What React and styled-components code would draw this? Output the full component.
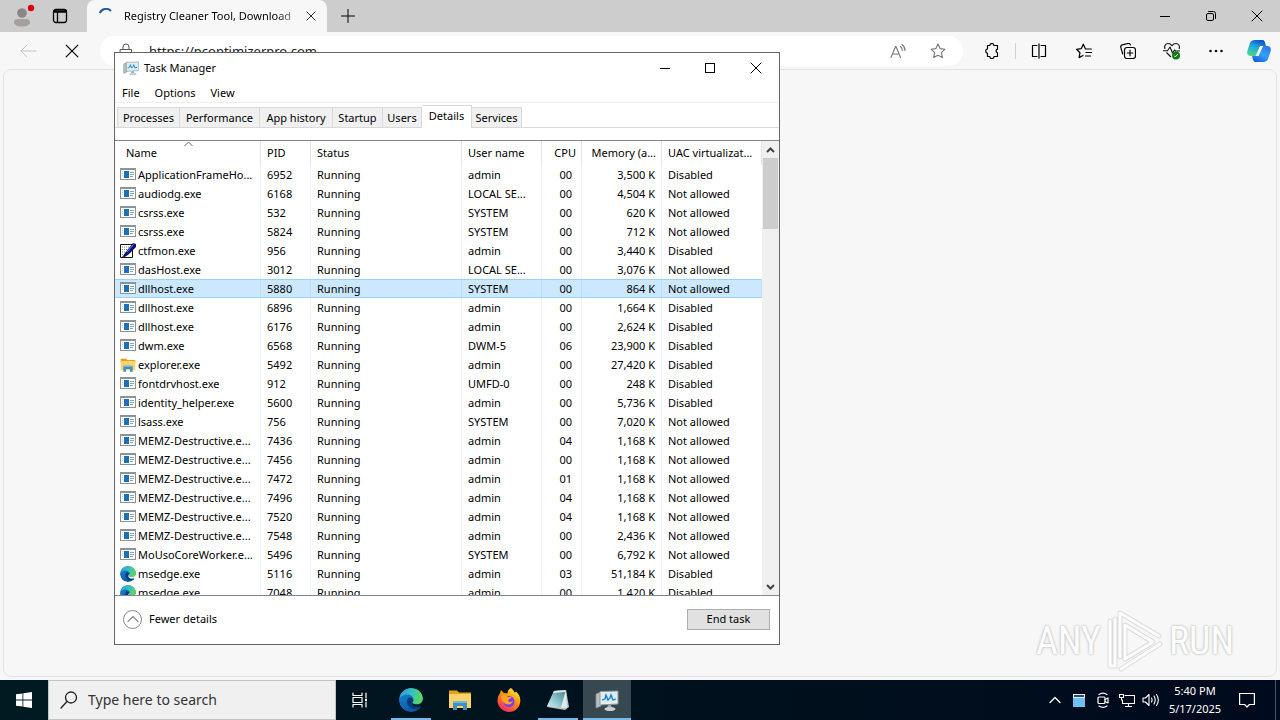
import React from 'react';
import styled, { createGlobalStyle, css } from 'styled-components';

const GlobalStyle = createGlobalStyle`
  * {
    box-sizing: border-box;
  }

  html, body, #root {
    height: 100%;
  }

  body {
    margin: 0;
    overflow: hidden;
    background: #f7f7f7;
    color: #000;
    font-family: 'Noto Sans', 'Open Sans', sans-serif;
    font-size: 11px;
    line-height: 16px;
  }

  button, input {
    margin: 0;
    padding: 0;
    border: 0;
    background: none;
    color: inherit;
    font: inherit;
  }

  svg {
    display: block;
    flex: none;
  }
`;

const PROCESSES = [
  ['app', 'ApplicationFrameHo...', 6952, 'admin', '00', '3,500 K', 'Disabled'],
  ['app', 'audiodg.exe', 6168, 'LOCAL SE...', '00', '4,504 K', 'Not allowed'],
  ['app', 'csrss.exe', 532, 'SYSTEM', '00', '620 K', 'Not allowed'],
  ['app', 'csrss.exe', 5824, 'SYSTEM', '00', '712 K', 'Not allowed'],
  ['pen', 'ctfmon.exe', 956, 'admin', '00', '3,440 K', 'Disabled'],
  ['app', 'dasHost.exe', 3012, 'LOCAL SE...', '00', '3,076 K', 'Not allowed'],
  ['app', 'dllhost.exe', 5880, 'SYSTEM', '00', '864 K', 'Not allowed'],
  ['app', 'dllhost.exe', 6896, 'admin', '00', '1,664 K', 'Disabled'],
  ['app', 'dllhost.exe', 6176, 'admin', '00', '2,624 K', 'Disabled'],
  ['app', 'dwm.exe', 6568, 'DWM-5', '06', '23,900 K', 'Disabled'],
  ['folder', 'explorer.exe', 5492, 'admin', '00', '27,420 K', 'Disabled'],
  ['app', 'fontdrvhost.exe', 912, 'UMFD-0', '00', '248 K', 'Disabled'],
  ['app', 'identity_helper.exe', 5600, 'admin', '00', '5,736 K', 'Disabled'],
  ['app', 'lsass.exe', 756, 'SYSTEM', '00', '7,020 K', 'Not allowed'],
  ['app', 'MEMZ-Destructive.e...', 7436, 'admin', '04', '1,168 K', 'Not allowed'],
  ['app', 'MEMZ-Destructive.e...', 7456, 'admin', '00', '1,168 K', 'Not allowed'],
  ['app', 'MEMZ-Destructive.e...', 7472, 'admin', '01', '1,168 K', 'Not allowed'],
  ['app', 'MEMZ-Destructive.e...', 7496, 'admin', '04', '1,168 K', 'Not allowed'],
  ['app', 'MEMZ-Destructive.e...', 7520, 'admin', '04', '1,168 K', 'Not allowed'],
  ['app', 'MEMZ-Destructive.e...', 7548, 'admin', '00', '2,436 K', 'Not allowed'],
  ['app', 'MoUsoCoreWorker.e...', 5496, 'SYSTEM', '00', '6,792 K', 'Not allowed'],
  ['edge', 'msedge.exe', 5116, 'admin', '03', '51,184 K', 'Disabled'],
  ['edge', 'msedge.exe', 7048, 'admin', '00', '1,420 K', 'Disabled'],
];

const SELECTED_PID = 5880;

/* Icons */

const Line = ({ size = 16, box = 16, width = 1, color = 'currentColor', children }) => (
  <svg
    width={size}
    height={size}
    viewBox={`0 0 ${box} ${box}`}
    fill="none"
    stroke={color}
    strokeWidth={width}
    strokeLinecap="round"
    strokeLinejoin="round"
    aria-hidden="true"
  >
    {children}
  </svg>
);

const CloseIcon = ({ size = 12 }) => (
  <Line size={size} box={12}>
    <path d="M1 1l10 10M11 1L1 11" />
  </Line>
);

const MinimizeIcon = () => (
  <svg width="12" height="12" shapeRendering="crispEdges" aria-hidden="true">
    <path d="M1 6h10v1H1z" />
  </svg>
);

const MaximizeIcon = () => (
  <svg width="12" height="12" fill="none" stroke="#000" shapeRendering="crispEdges" aria-hidden="true">
    <path d="M1.5 1.5h9v9h-9z" />
  </svg>
);

const RestoreIcon = () => (
  <Line size={12} box={12}>
    <rect x="1.5" y="3.5" width="7" height="7" rx="1.5" />
    <path d="M3.5 1.5h5a2 2 0 0 1 2 2v5" />
  </Line>
);

const ProfileIcon = () => (
  <svg width="24" height="24" viewBox="0 0 24 24" aria-hidden="true">
    <circle cx="11" cy="9" r="4.8" fill="#8b8684" />
    <path d="M3 18.5c0-2.500 1.500-3.500 3.500-3.500h9c2 0 3.500 1 3.500 3.500C19 21 15 22.500 11 22.500S3 21 3 18.500z" fill="#a3a09e" />
    <circle cx="20" cy="4" r="3.2" fill="#d9000f" />
  </svg>
);

const TabActionsIcon = () => (
  <Line width={1.3}>
    <rect x="1.5" y="1.5" width="13" height="13" rx="2.5" />
    <path d="M2 4h12M5.500 5v9M2 3h12" />
  </Line>
);

const SpinnerIcon = () => (
  <svg width="16" height="16" viewBox="0 0 16 16" fill="none" stroke="#1d5fa0" strokeWidth="2" aria-hidden="true">
    <path d="M1.800 5A6.800 6.800 0 0 1 13 3" />
  </svg>
);

const PlusIcon = () => (
  <Line>
    <path d="M8 1.500v13M1.500 8h13" />
  </Line>
);

const BackIcon = () => (
  <Line size={18} box={18} color="#c4c4c4">
    <path d="M17 9H2M8 3L2 9l6 6" />
  </Line>
);

const LockIcon = () => (
  <Line color="#555">
    <path d="M2.500 6.500h11v8h-11zM5 6.500V4a3 3 0 0 1 6 0v2.500M8 10v1" />
  </Line>
);

const ReadAloudIcon = () => (
  <Line color="#777" width={1.1}>
    <path d="M1 14.500L5.500 3.500h.5l4.500 11M2.500 11h6.500M10.500 3.500c1.200.9 1.800 2.200 1.800 4M12 1.500c2 1.400 3 3.400 3 6" />
  </Line>
);

const StarIcon = () => (
  <Line color="#777" width={1.1}>
    <path d="M8 1l2.100 4.600 4.900.6-3.600 3.400 1 5L8 12.200 3.600 14.600l1-5L1 6.200l4.900-.6z" />
  </Line>
);

const ExtensionsIcon = () => (
  <Line width={1.2}>
    <path d="M3.500 2.500h2.300a2 2 0 0 1 4 0h3.700v3.700a1.900 1.900 0 0 0 0 3.700v3.600H10a2 2 0 0 1-4.200 0H3.500V10.300a2.300 2.300 0 0 1 0-4.500z" />
  </Line>
);

const SplitIcon = () => (
  <Line width={1.2}>
    <path d="M6 2.500H1.500v11H6M10 2.500h4.500v11H10M8 .8v14.400" />
  </Line>
);

const FavoritesIcon = () => (
  <Line width={1.2}>
    <path d="M15.300 6H9.500L7.300 1.200 5.200 5.700l-4.700.6L4 9.700l-.9 4.900L7 12.500M10 9.500h5.500M9.500 13h5" />
  </Line>
);

const CollectionsIcon = () => (
  <Line width={1.2}>
    <rect x="4.5" y="4.5" width="11" height="11" rx="2.5" />
    <path d="M10 7.200v5.600M7.200 10h5.600M2.700 11L.8 4.400a2 2 0 0 1 1.400-2.500L8 .5a2 2 0 0 1 2.400 1.400" />
  </Line>
);

const HealthIcon = () => (
  <svg width="18" height="18" viewBox="0 0 18 18" fill="none" stroke="#111" strokeWidth="1.1" strokeLinejoin="round" aria-hidden="true">
    <path d="M2 7C.8 3.500 3 1.500 5 1.500c2 0 3.200 1 4 2.200.8-1.200 2-2.200 4-2.200 2.300 0 4.200 2.200 3.200 5.500M3.500 10.500L8 15M0 8.800h4.500L7 5l2.500 6 2-3 1 1H17" />
    <circle cx="13" cy="13.5" r="4" fill="#0f7b0f" stroke="none" />
    <path d="M11.200 13.700l1.200 1.200 2.400-2.800" stroke="#fff" strokeWidth="1" />
  </svg>
);

const MoreIcon = () => (
  <svg width="16" height="16" fill="#111" aria-hidden="true">
    <circle cx="2.5" cy="8" r="1.3" />
    <circle cx="8" cy="8" r="1.3" />
    <circle cx="13.5" cy="8" r="1.3" />
  </svg>
);

const CopilotIcon = () => (
  <svg width="24" height="24" viewBox="0 0 24 24" aria-hidden="true">
    <defs>
      <linearGradient id="copilotLeft" x1="0.7" y1="0" x2="0.3" y2="1">
        <stop offset="0" stopColor="#0b4fc4" />
        <stop offset="0.45" stopColor="#1fa7e0" />
        <stop offset="1" stopColor="#4fd68a" />
      </linearGradient>
      <linearGradient id="copilotRight" x1="0.8" y1="0" x2="0.2" y2="1">
        <stop offset="0" stopColor="#2f73ea" />
        <stop offset="0.5" stopColor="#35a2f4" />
        <stop offset="1" stopColor="#1259d8" />
      </linearGradient>
    </defs>
    <path d="M8 1h7.500c1.800 0 2.200 1.500 2.700 3l.8 3h-4c-2 0-2.600 1.300-3 2.800L10.500 15c-.5 1.500-1.200 2-2.700 2H4C.5 17-.5 14.500.5 11.500l2.300-7C3.600 2.200 5 1 8 1z" fill="url(#copilotLeft)" />
    <path d="M16 23H8.500c-1.800 0-2.200-1.500-2.700-3L5 17h4c2 0 2.600-1.300 3-2.800L13.500 9c.5-1.500 1.200-2 2.700-2H20c3.500 0 4.500 2.500 3.500 5.500l-2.300 7C20.400 21.800 19 23 16 23z" fill="url(#copilotRight)" />
    <path d="M13.200 7h3L11.500 17h-3z" fill="#fff" />
  </svg>
);

const EdgeIcon = ({ size = 16 }) => (
  <svg width={size} height={size} viewBox="0 0 24 24" aria-hidden="true">
    <defs>
      <linearGradient id="edgeTop" x1="0" y1="0.3" x2="1" y2="0.5">
        <stop offset="0" stopColor="#2a9fdc" />
        <stop offset="0.5" stopColor="#35c1c0" />
        <stop offset="1" stopColor="#5fd955" />
      </linearGradient>
      <linearGradient id="edgeBody" x1="0" y1="0" x2="0.8" y2="1">
        <stop offset="0" stopColor="#1b8ad6" />
        <stop offset="1" stopColor="#0c4d9c" />
      </linearGradient>
      <clipPath id="edgeClip">
        <path d="M12 0c7 0 12 5 12 10.500 0 3-1.500 5-4 6l2 3C20 22.500 16 24 12 24 5.400 24 0 18.600 0 12S5.400 0 12 0z" />
      </clipPath>
    </defs>
    <g clipPath="url(#edgeClip)">
      <circle cx="12" cy="12" r="12" fill="url(#edgeBody)" />
      <path d="M.3 10.500C1 4.500 6 0 12 0c7 0 12 5 12 10.500 0 3.800-3 6-6.300 6-3 0-4.400-1-4.400-1.900 0-.8 1.200-1.200 1.200-3 0-2.500-2.500-5-6.200-5C4.500 6.600 1.300 8.500.3 10.500z" fill="url(#edgeTop)" />
      <path d="M9.200 10c-3 4.500.3 10.300 6 10.900 2.800.2 5-.7 7.200-2.500-2.800 1.300-6.500 1-8.700-.8-2-1.600-2.200-3.600.4-5-.2-2.600-3-4-4.900-2.600z" fill="#073a78" />
      <path d="M14.500 11.500c0 1.800-1.200 2.200-1.200 3 0 .9 1.400 1.900 4.400 1.900 2 0 4.300-.9 5.500-2.700L24 16l-2 2.200c-3 1.200-6.300.9-8.200-.7-2-1.600-1.500-4.500.7-6z" fill={size > 16 ? '#06202c' : '#fff'} />
    </g>
  </svg>
);

const FolderIcon = ({ size = 16 }) => (
  <svg width={size} height={size} viewBox="0 0 24 24" aria-hidden="true">
    <path d="M1 2.500h8l2 2h12v4H1z" fill="#e3a21c" />
    <path d="M1 6h22v14H1z" fill="#ffd368" />
    <path d="M5 13h14v9h-4v-4H9v4H5z" fill="#3f8fc4" />
    <path d="M5 13h14v2H5z" fill="#6fb8e0" />
  </svg>
);

const AppIcon = () => (
  <svg width="16" height="16" shapeRendering="crispEdges" aria-hidden="true">
    <path d="M0 1h16v12H0z" fill="#8b9298" />
    <path d="M1 3h14v9H1z" fill="#fff" />
    <path d="M4 4h5v7H4z" fill="#1d6fb8" />
    <path d="M2 4h1v1H2zM2 6h1v1H2zM2 8h1v1H2z" fill="#c5d5e2" />
    <path d="M10 5h4v1h-4zM10 7h4v1h-4zM10 9h3v1h-3z" fill="#86a5bd" />
  </svg>
);

const PenIcon = () => (
  <svg width="16" height="16" viewBox="0 0 16 16" aria-hidden="true">
    <path d="M.5 1.500h12v13H.5z" fill="#fff" stroke="#111" />
    <path d="M2 4h8M2 6.500h6M2 9h4M2 11.500h3" stroke="#777" strokeDasharray="1 1" />
    <path d="M13 0l3 1v3L8 12l-5 3 2-5z" fill="#10107a" />
    <path d="M13.500 1.500L7 9" stroke="#7482e0" />
    <path d="M2 15l3-4" stroke="#000" />
  </svg>
);

const TaskManagerIcon = ({ size = 16 }) => (
  <svg width={size} height={size} viewBox="0 0 24 24" aria-hidden="true">
    <path d="M1 6l5-2v14l-5 2z" fill="#b9bec2" stroke="#888f94" strokeWidth=".8" />
    <path d="M5 3.500L23 3v13L5 17z" fill="#e6ecef" stroke="#8b979f" />
    <path d="M7 5.500L21 5v9L7 15z" fill="#d4edfa" />
    <path d="M7 12l3-1 1-4 2 5 2-2 1-3 2 5 3-1" fill="none" stroke="#1b78b5" strokeWidth="1.3" />
    <path d="M13 17h3l1 3h-5z" fill="#9aa4aa" />
    <ellipse cx="15" cy="21" rx="5.500" ry="2" fill="#c9d0d4" />
  </svg>
);

const FirefoxIcon = () => (
  <svg width="24" height="24" viewBox="0 0 24 24" aria-hidden="true">
    <defs>
      <linearGradient id="foxBody" x1="0.8" y1="0" x2="0.2" y2="1">
        <stop offset="0" stopColor="#fff04a" />
        <stop offset="0.4" stopColor="#ff980e" />
        <stop offset="1" stopColor="#f2206a" />
      </linearGradient>
    </defs>
    <path d="M14 0c2 1.500 3 3 3.500 4.500 1-.3 1.300-.5 1.500-1 3 3 4.500 5.500 4.300 9.500C23 19.500 18 24 12 24S.5 19 .5 12.800c0-3 1-5.800 2.500-7.600L4 2l2.800 3c1.400-.2 2.700 0 3.700.5C10.500 3 12 1 14 0z" fill="url(#foxBody)" />
    <circle cx="12" cy="13.500" r="5.500" fill="#7a3cf0" />
    <path d="M4 8c2.500-1.500 5-.8 6.500 1h4c-.2 1.500-3 1.800-3.200 3.200C11 14 13.500 15 16 13c-1 3.500-5 4.500-8 2.500C5.500 14 4.500 11 4 8z" fill="#ffa51a" />
  </svg>
);

const NotepadIcon = () => (
  <svg width="24" height="24" viewBox="0 0 24 24" aria-hidden="true">
    <defs>
      <linearGradient id="padFace" x1="1" y1="0" x2="0" y2="1">
        <stop offset="0" stopColor="#3f7f8c" />
        <stop offset="0.6" stopColor="#93cbd2" />
        <stop offset="1" stopColor="#d7f0f0" />
      </linearGradient>
    </defs>
    <path d="M8 3l12-1 3 17-4 3-18-3z" fill="#b9c4c6" />
    <path d="M8 3l12-1-5 18-14-2z" fill="url(#padFace)" />
    <path d="M20 2l-5 18 6-.5z" fill="#e3ebec" />
    <path d="M8 3l12-1-.5 2L7 5z" fill="#d5e6ea" />
  </svg>
);

const WindowsLogo = () => (
  <svg width="16" height="16" viewBox="0 0 16 16" fill="#fff" aria-hidden="true">
    <path d="M0 2.300L6.500 1.400v6.200H0zM7.300 1.300L16 0v7.600H7.300zM0 8.400h6.500v6.200L0 13.700zM7.300 8.400H16V16l-8.700-1.300z" />
  </svg>
);

const SearchIcon = () => (
  <Line size={18} box={18} width={1.3} color="#222">
    <circle cx="11" cy="6.500" r="5.500" />
    <path d="M7 10.500L1 17" />
  </Line>
);

const TaskViewIcon = () => (
  <Line width={1.2} color="#fff">
    <path d="M1 1v2.500h9V1M1 15v-2.500h9V15M1 5.500h9v5H1zM14 1v5M14 10v5" />
    <path d="M13 7h2v2h-2z" fill="#fff" stroke="none" />
  </Line>
);

const ChevronUpIcon = ({ width = 1.3 }) => (
  <Line width={width}>
    <path d="M3 10.500l5-5 5 5" />
  </Line>
);

const AppTrayIcon = () => (
  <svg width="12" height="13" aria-hidden="true">
    <path d="M0 0h12v13H0z" fill="#6fc0f5" />
    <path d="M0 0h12v4H0z" fill="#dfeefa" />
    <path d="M1 1h10v2H1z" fill="#24506e" />
  </svg>
);

const CameraTrayIcon = () => (
  <Line color="#fff" width={1.2}>
    <rect x="3" y="5" width="7" height="6.500" rx="1" />
    <path d="M10 7.500l3-1.500v5l-3-1.500M4 2.500c2.500-1.800 5.500-1.800 8 0M4 14c2.500 1.600 5.500 1.600 8 0" />
  </Line>
);

const NetworkTrayIcon = () => (
  <Line color="#fff" width={1.1}>
    <path d="M6 3.500h9.500v8H3.500V8M9.500 11.500v3M6.500 14.500h6M.5 2.500h4v3h-4zM2.500 5.500V8h1" />
  </Line>
);

const SoundTrayIcon = () => (
  <Line size={18} box={18} color="#fff" width={1.1}>
    <path d="M1 7h2.500L7 3.500v11L3.500 11H1zM9.500 7c.7 1.200.7 2.800 0 4M12 5c1.500 2.500 1.500 5.500 0 8M14.500 3.500c2.200 3.300 2.200 7.700 0 11" />
  </Line>
);

const MessageIcon = () => (
  <Line color="#fff" width={1.2}>
    <path d="M.6 1.500h14.800v11h-5L8 15l-2.400-2.500h-5z" />
  </Line>
);

const ribbons = 'M15 48V4l39 23M5 12v45h5V10M16 60l39-25M20 50V16l28 17-28 17';

const WatermarkIcon = () => (
  <svg width="60" height="64" viewBox="0 0 60 64" fill="none" strokeLinejoin="round" strokeLinecap="round" aria-hidden="true">
    <path d={ribbons} stroke="#dcdcdc" strokeWidth="5" />
    <path d={ribbons} stroke="#fcfcfc" strokeWidth="3" />
  </svg>
);

const processIcons = {
  app: AppIcon,
  pen: PenIcon,
  folder: FolderIcon,
  edge: EdgeIcon,
};

/* Browser */

const Desktop = styled.div`
  height: 100vh;
  display: flex;
  flex-direction: column;
`;

const Browser = styled.main`
  position: relative;
  flex: 1;
  min-height: 0;
  display: flex;
  flex-direction: column;
  background: #f7f7f7;
`;

const TabStrip = styled.div`
  height: 32px;
  display: flex;
  align-items: stretch;
  background: #cdcdcd;
`;

const IconButton = styled.button`
  width: ${({ $width }) => $width || 32}px;
  display: flex;
  align-items: center;
  justify-content: center;
`;

const ProfileButton = styled(IconButton)`
  margin-left: 4px;
`;

const BrowserTab = styled.div`
  width: 240px;
  display: flex;
  align-items: center;
  gap: 10px;
  margin-left: 9px;
  padding: 0 8px 0 11px;
  border-radius: 8px 8px 0 0;
  background: #f7f7f7;
`;

const TabTitle = styled.span`
  flex: 1;
  white-space: nowrap;
  mask-image: linear-gradient(90deg, #000 90%, #0006);
`;

const WindowControls = styled.div`
  display: flex;
  margin-left: auto;
`;

const Toolbar = styled.div`
  height: 37px;
  display: flex;
  align-items: center;
`;

const NavButtons = styled.div`
  width: 100px;
  display: flex;
  align-items: center;
  padding-left: 6px;
`;

const AddressBar = styled.div`
  flex: 1;
  height: 30px;
  display: flex;
  align-items: center;
  gap: 15px;
  padding: 0 9px 0 18px;
  border-radius: 15px;
  background: #fff;
`;

const AddressInput = styled.input`
  flex: 1;
  min-width: 0;
  outline: 0;
  color: #222;
  font-size: 13px;
  line-height: 20px;
`;

const ToolbarActions = styled.div`
  display: flex;
  align-items: center;
  padding-left: 6px;
`;

const Divider = styled.span`
  width: 1px;
  height: 16px;
  background: #d0d0d0;
`;

const PageFrame = styled.section`
  flex: 1;
  display: flex;
  align-items: flex-end;
  justify-content: flex-end;
  margin: 0 3px 3px;
  padding: 0 42px 3px 0;
  border: 1px solid #e3e3e3;
  border-radius: 8px;
`;

const Watermark = styled.div`
  display: flex;
  align-items: center;
  gap: 4px;
  color: #fcfcfc;
  font-family: 'Roboto Condensed', 'Liberation Sans Narrow', Roboto, sans-serif;
  font-size: 38px;
  line-height: 64px;
  text-shadow: 0 0 2px #bbb, 0 0 3px #ccc;
`;

/* Task manager */

const Window = styled.section`
  position: absolute;
  top: 52px;
  left: 114px;
  width: 666px;
  display: flex;
  flex-direction: column;
  border: 1px solid #666;
  background: #fff;
`;

const TitleBar = styled.header`
  height: 30px;
  display: flex;
  align-items: stretch;
  padding-left: 8px;
`;

const WindowTitle = styled.h1`
  display: flex;
  align-items: center;
  gap: 5px;
  margin: 0;
  font-size: 11px;
  font-weight: 400;
`;

const MenuBar = styled.nav`
  height: 20px;
  display: flex;
  align-items: center;
  gap: 15px;
  padding-left: 7px;
  border-bottom: 1px solid #efefef;
`;

const TabList = styled.div`
  height: 25px;
  display: flex;
  align-items: flex-end;
  padding-left: 2px;
  border-bottom: 1px solid #d9d9d9;
`;

const TabButton = styled.button`
  width: ${({ $width }) => $width}px;
  height: 20px;
  border: 1px solid #d9d9d9;
  border-left-width: 0;
  border-bottom: 0;
  background: #f0f0f0;
  white-space: nowrap;

  &:first-child {
    border-left-width: 1px;
  }

  ${({ $active }) =>
    $active &&
    css`
      height: 23px;
      margin-bottom: -1px;
      padding-bottom: 2px;
      background: #fff;
    `};
`;

const ListArea = styled.div`
  height: 456px;
  display: flex;
  margin-top: 12px;
  overflow: hidden;
  border-top: 1px solid #828790;
  border-bottom: 1px solid #828790;
`;

const ProcessTable = styled.table`
  width: calc(100% - 17px);
  align-self: flex-start;
  table-layout: fixed;
  border-collapse: separate;
  border-spacing: 0;
`;

const HeaderCell = styled.th`
  position: relative;
  width: ${({ $width }) => $width}px;
  height: 24px;
  padding: 0 5px 0 6px;
  border-right: 1px solid #e5e5e5;
  font-weight: 400;
  text-align: ${({ $align }) => $align || 'left'};
  white-space: nowrap;

  &:first-child {
    padding-left: 11px;
  }
`;

const SortMark = styled.span`
  position: absolute;
  top: 0;
  left: 69px;
  color: #666;
`;

const Cell = styled.td`
  height: 19px;
  padding: 0 ${({ $end }) => $end || 0}px 0 6px;
  border-right: 1px solid #edf4fa;
  text-align: ${({ $align }) => $align || 'left'};
  white-space: nowrap;

  &:last-child {
    border-right-color: transparent;
  }
`;

const Row = styled.tr`
  ${({ $selected }) =>
    $selected &&
    css`
      ${Cell} {
        border-top: 1px solid #99d1ff;
        border-bottom: 1px solid #99d1ff;
        border-right-color: #bfe0f8;
        background: #cce8ff;
      }
    `};
`;

const NameCell = styled.div`
  height: 17px;
  display: flex;
  align-items: center;
  gap: 2px;
  margin-left: -1px;
`;

const Scrollbar = styled.div`
  width: 17px;
  display: flex;
  flex-direction: column;
  background: #f0f0f0;
`;

const ScrollButton = styled.button`
  height: 17px;
  display: flex;
  align-items: center;
  justify-content: center;
  color: #444;
`;

const ScrollThumb = styled.div`
  height: 71px;
  margin: 0 1px auto;
  background: #cdcdcd;
`;

const WindowFooter = styled.footer`
  height: 48px;
  display: flex;
  align-items: center;
  justify-content: space-between;
  padding: 0 9px 2px 8px;
`;

const DetailsButton = styled.button`
  display: flex;
  align-items: center;
  gap: 7px;
`;

const Circle = styled.span`
  width: 19px;
  height: 19px;
  display: flex;
  align-items: center;
  justify-content: center;
  border: 1px solid #888;
  border-radius: 50%;
  color: #888;
`;

const EndTaskButton = styled.button`
  width: 83px;
  height: 21px;
  border: 1px solid #adadad;
  background: #e1e1e1;
`;

/* Taskbar */

const Taskbar = styled.footer`
  height: 40px;
  display: flex;
  align-items: stretch;
  background: linear-gradient(90deg, #001a22, #00101c 60%, #000a1e);
  color: #fff;
`;

const SearchBox = styled.label`
  width: 288px;
  display: flex;
  align-items: center;
  gap: 10px;
  padding-left: 11px;
  border: 1px solid #c4c4c4;
  background: #f0f0f0;
`;

const SearchInput = styled.input`
  flex: 1;
  min-width: 0;
  outline: 0;
  font-size: 14px;
  line-height: 20px;

  &::placeholder {
    color: #333;
    opacity: 1;
  }
`;

const TaskButtons = styled.div`
  display: flex;
  gap: 1px;
  margin-left: 3px;
`;

const TaskButton = styled.button`
  width: 48px;
  display: flex;
  align-items: center;
  justify-content: center;
  background: ${({ $active }) => ($active ? '#384850' : 'none')};
  ${({ $running }) =>
    $running &&
    css`
      margin: 0 4px;
      width: 40px;
      box-shadow: inset 0 -2px #76b9ed;
    `};
  ${({ $active }) =>
    $active &&
    css`
      box-shadow: inset 0 -2px #76b9ed;
    `};
`;

const Tray = styled.div`
  display: flex;
  margin-left: auto;
`;

const Clock = styled.time`
  width: 64px;
  display: flex;
  flex-direction: column;
  justify-content: center;
  line-height: 18px;
  text-align: center;
  white-space: nowrap;
`;

const ShowDesktop = styled.button`
  width: 5px;
  margin-left: 8px;
  border-left: 1px solid #4c5666;
`;

const tabs = [
  ['Processes', 63],
  ['Performance', 80],
  ['App history', 73],
  ['Startup', 50],
  ['Users', 39],
  ['Details', 50],
  ['Services', 50],
];

const columns = [
  ['Name', 146],
  ['PID', 50],
  ['Status', 151],
  ['User name', 80],
  ['CPU', 40, 'right'],
  ['Memory (a...', 80, 'right'],
  ['UAC virtualizat...', 100],
];

const TaskManager = () => (
  <Window aria-label="Task Manager">
    <TitleBar>
      <WindowTitle>
        <TaskManagerIcon />
        Task Manager
      </WindowTitle>
      <WindowControls>
        <IconButton $width={45} aria-label="Minimize">
          <MinimizeIcon />
        </IconButton>
        <IconButton $width={46} aria-label="Maximize">
          <MaximizeIcon />
        </IconButton>
        <IconButton $width={46} aria-label="Close">
          <CloseIcon />
        </IconButton>
      </WindowControls>
    </TitleBar>
    <MenuBar>
      <button>File</button>
      <button>Options</button>
      <button>View</button>
    </MenuBar>
    <TabList role="tablist">
      {tabs.map(([name, width]) => (
        <TabButton
          key={name}
          role="tab"
          aria-selected={name === 'Details'}
          $width={width}
          $active={name === 'Details'}
        >
          {name}
        </TabButton>
      ))}
    </TabList>
    <ListArea>
      <ProcessTable>
        <thead>
          <tr>
            {columns.map(([name, width, align]) => (
              <HeaderCell key={name} $width={width} $align={align}>
                {name}
                {name === 'Name' && (
                  <SortMark>
                    <svg width="9" height="6" fill="none" stroke="currentColor" aria-hidden="true">
                      <path d="M.5 5l4-4 4 4" />
                    </svg>
                  </SortMark>
                )}
              </HeaderCell>
            ))}
          </tr>
        </thead>
        <tbody>
          {PROCESSES.map(([icon, name, pid, user, cpu, memory, uac]) => {
            const Icon = processIcons[icon];
            return (
              <Row key={pid} $selected={pid === SELECTED_PID}>
                <Cell>
                  <NameCell>
                    <Icon />
                    {name}
                  </NameCell>
                </Cell>
                <Cell>{pid}</Cell>
                <Cell>Running</Cell>
                <Cell>{user}</Cell>
                <Cell $align="right" $end={9}>{cpu}</Cell>
                <Cell $align="right" $end={6}>{memory}</Cell>
                <Cell>{uac}</Cell>
              </Row>
            );
          })}
        </tbody>
      </ProcessTable>
      <Scrollbar>
        <ScrollButton aria-label="Scroll up">
          <svg width="9" height="6" fill="none" stroke="currentColor" strokeWidth="2" aria-hidden="true">
            <path d="M1 5l3.500-3.500L8 5" />
          </svg>
        </ScrollButton>
        <ScrollThumb />
        <ScrollButton aria-label="Scroll down">
          <svg width="9" height="6" fill="none" stroke="currentColor" strokeWidth="2" aria-hidden="true">
            <path d="M1 1l3.500 3.500L8 1" />
          </svg>
        </ScrollButton>
      </Scrollbar>
    </ListArea>
    <WindowFooter>
      <DetailsButton>
        <Circle>
          <ChevronUpIcon width={1.1} />
        </Circle>
        Fewer details
      </DetailsButton>
      <EndTaskButton>End task</EndTaskButton>
    </WindowFooter>
  </Window>
);

const App = () => (
  <Desktop>
    <GlobalStyle />
    <Browser>
      <TabStrip>
        <ProfileButton $width={38} aria-label="Profile">
          <ProfileIcon />
        </ProfileButton>
        <IconButton $width={36} aria-label="Tab actions">
          <TabActionsIcon />
        </IconButton>
        <BrowserTab>
          <SpinnerIcon />
          <TabTitle>Registry Cleaner Tool, Download</TabTitle>
          <IconButton $width={16} aria-label="Close tab">
            <CloseIcon size={10} />
          </IconButton>
        </BrowserTab>
        <IconButton $width={42} aria-label="New tab">
          <PlusIcon />
        </IconButton>
        <WindowControls>
          <IconButton $width={46} aria-label="Minimize browser">
            <MinimizeIcon />
          </IconButton>
          <IconButton $width={46} aria-label="Restore browser">
            <RestoreIcon />
          </IconButton>
          <IconButton $width={46} aria-label="Close browser">
            <CloseIcon />
          </IconButton>
        </WindowControls>
      </TabStrip>
      <Toolbar>
        <NavButtons>
          <IconButton $width={44} aria-label="Back">
            <BackIcon />
          </IconButton>
          <IconButton $width={44} aria-label="Stop loading">
            <CloseIcon size={14} />
          </IconButton>
        </NavButtons>
        <AddressBar>
          <LockIcon />
          <AddressInput aria-label="Address" defaultValue="https://pcoptimizerpro.com" />
          <IconButton $width={18} aria-label="Read aloud">
            <ReadAloudIcon />
          </IconButton>
          <IconButton aria-label="Add to favorites">
            <StarIcon />
          </IconButton>
        </AddressBar>
        <ToolbarActions>
          <IconButton $width={46} aria-label="Extensions">
            <ExtensionsIcon />
          </IconButton>
          <Divider />
          <IconButton $width={46} aria-label="Split screen">
            <SplitIcon />
          </IconButton>
          <IconButton $width={44} aria-label="Favorites">
            <FavoritesIcon />
          </IconButton>
          <IconButton $width={44} aria-label="Collections">
            <CollectionsIcon />
          </IconButton>
          <IconButton $width={44} aria-label="Browser essentials">
            <HealthIcon />
          </IconButton>
          <IconButton $width={44} aria-label="More">
            <MoreIcon />
          </IconButton>
          <IconButton $width={42} aria-label="Copilot">
            <CopilotIcon />
          </IconButton>
        </ToolbarActions>
      </Toolbar>
      <PageFrame>
        <Watermark>
          ANY
          <WatermarkIcon />
          RUN
        </Watermark>
      </PageFrame>
      <TaskManager />
    </Browser>
    <Taskbar>
      <IconButton $width={48} aria-label="Start">
        <WindowsLogo />
      </IconButton>
      <SearchBox>
        <SearchIcon />
        <SearchInput placeholder="Type here to search" aria-label="Type here to search" />
      </SearchBox>
      <IconButton $width={48} aria-label="Task view">
        <TaskViewIcon />
      </IconButton>
      <TaskButtons>
        <TaskButton $running aria-label="Microsoft Edge">
          <EdgeIcon size={24} />
        </TaskButton>
        <TaskButton aria-label="File Explorer">
          <FolderIcon size={24} />
        </TaskButton>
        <TaskButton aria-label="Firefox">
          <FirefoxIcon />
        </TaskButton>
        <TaskButton $running aria-label="Notepad">
          <NotepadIcon />
        </TaskButton>
        <TaskButton $active aria-label="Task Manager">
          <TaskManagerIcon size={24} />
        </TaskButton>
      </TaskButtons>
      <Tray>
        <IconButton $width={24} aria-label="Show hidden icons">
          <ChevronUpIcon />
        </IconButton>
        <IconButton $width={24} aria-label="Running app">
          <AppTrayIcon />
        </IconButton>
        <IconButton $width={24} aria-label="Meet now">
          <CameraTrayIcon />
        </IconButton>
        <IconButton $width={24} aria-label="Network">
          <NetworkTrayIcon />
        </IconButton>
        <IconButton $width={24} aria-label="Volume">
          <SoundTrayIcon />
        </IconButton>
        <Clock>
          <span>5:40 PM</span>
          <span>5/17/2025</span>
        </Clock>
        <IconButton $width={40} aria-label="Notifications">
          <MessageIcon />
        </IconButton>
        <ShowDesktop aria-label="Show desktop" />
      </Tray>
    </Taskbar>
  </Desktop>
);

export default App;
